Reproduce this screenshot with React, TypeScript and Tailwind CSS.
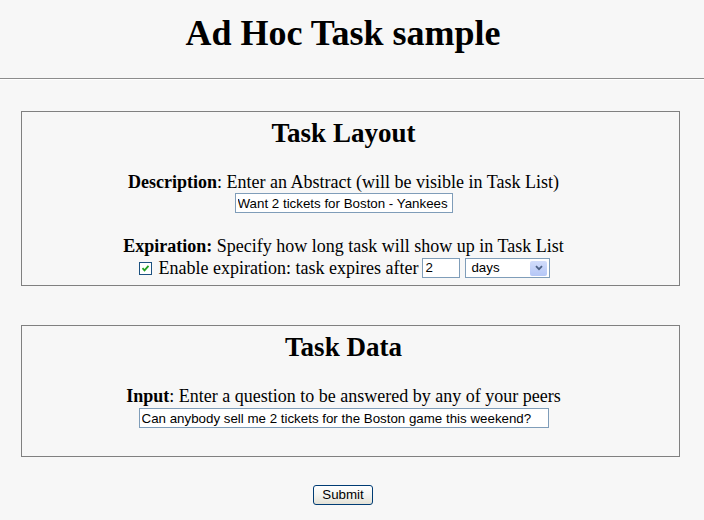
import React from "react";

const serif = "font-['Liberation_Serif','Times_New_Roman',serif]";
const sans = "font-['Liberation_Sans',Arial,sans-serif]";

function Checkbox() {
  return (
    <span className="inline-flex h-[13px] w-[13px] shrink-0 items-center justify-center border border-[#1c5180] bg-white">
      <svg width="9" height="9" viewBox="0 0 9 9">
        <path d="M1.5 4.2 L3.5 6.3 L7.5 1.8" fill="none" stroke="#21a121" strokeWidth="1.8" />
      </svg>
    </span>
  );
}

function SelectBox() {
  return (
    <div className={`flex h-[20px] w-[85px] items-center justify-between border border-[#7f9db9] bg-white pl-[5px] pr-[2px] text-[13.33px] text-black ${sans}`}>
      <span>days</span>
      <span className="flex h-[15px] w-[17px] items-center justify-center rounded-[2px] bg-gradient-to-b from-[#d2ddfb] to-[#b4c6f6]">
        <svg width="8" height="6" viewBox="0 0 8 6">
          <path d="M1 1.2 L4 4.2 L7 1.2" fill="none" stroke="#4d6185" strokeWidth="1.8" />
        </svg>
      </span>
    </div>
  );
}

export default function App() {
  return (
    <div className={`min-h-[520px] w-[704px] bg-[#f7f7f7] text-black ${serif}`}>
      <div className="pt-[13px]">
        <h1 className="w-[686px] text-center text-[36px] font-bold leading-[40px]">Ad Hoc Task sample</h1>
      </div>
      <div className="mt-[25px] h-[2px] w-full border-t border-b border-t-[#8c8c8c] border-b-white" />

      <div className="ml-[21px] mt-[31px] w-[659px] border border-[#808080] pr-[14px] pt-[5px] pb-[7px]">
        <h2 className="text-center text-[27px] font-bold leading-[32px]">Task Layout</h2>
        <div className="mt-[23px] text-center text-[18px] leading-[20px]">
          <b>Description</b>: Enter an Abstract (will be visible in Task List)
        </div>
        <div className="mt-[1px] flex justify-center">
          <input
            readOnly
            defaultValue="Want 2 tickets for Boston - Yankees"
            className={`h-[20px] w-[218px] border border-[#7f9db9] bg-white px-[2px] text-[13.33px] text-black outline-none ${sans}`}
          />
        </div>
        <div className="mt-[23px] text-center text-[18px] leading-[20px]">
          <b>Expiration:</b> Specify how long task will show up in Task List
        </div>
        <div className="mt-[2px] flex h-[20px] items-center justify-center pl-[2px] text-[18px] leading-[20px]">
          <Checkbox />
          <span className="ml-[7px]">Enable expiration: task expires after</span>
          <input
            readOnly
            defaultValue="2"
            className={`ml-[4px] h-[20px] w-[38px] border border-[#7f9db9] bg-white px-[2px] text-[13.33px] text-black outline-none ${sans}`}
          />
          <div className="ml-[5px]">
            <SelectBox />
          </div>
        </div>
      </div>

      <div className="ml-[21px] mt-[39px] w-[659px] border border-[#808080] pr-[14px] pt-[5px] pb-[28px]">
        <h2 className="text-center text-[27px] font-bold leading-[32px]">Task Data</h2>
        <div className="mt-[23px] text-center text-[18px] leading-[20px]">
          <b>Input</b>: Enter a question to be answered by any of your peers
        </div>
        <div className="mt-[2px] flex justify-center">
          <input
            readOnly
            defaultValue="Can anybody sell me 2 tickets for the Boston game this weekend?"
            className={`h-[20px] w-[410px] border border-[#7f9db9] bg-white px-[2px] text-[13.33px] text-black outline-none ${sans}`}
          />
        </div>
      </div>

      <div className="mt-[28px] flex w-[686px] justify-center">
        <button
          className={`h-[20px] w-[60px] rounded-[3px] border border-[#003c74] bg-gradient-to-b from-white via-[#f4f4f0] to-[#e3e1d6] text-[13.33px] leading-[18px] text-black ${sans}`}
        >
          Submit
        </button>
      </div>
    </div>
  );
}
